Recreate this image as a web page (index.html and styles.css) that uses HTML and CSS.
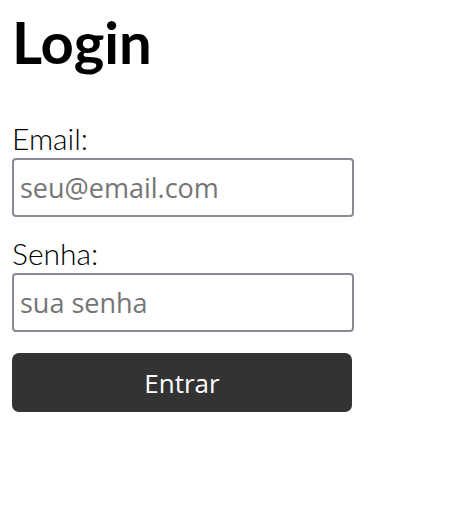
FILE: index.html
```html
<!DOCTYPE html>
<html lang="pt">
<head>
<meta charset="utf-8">
<link rel="stylesheet" href="styles.css">
</head>
<body>
<main class="login">
  <h1 class="title">Login</h1>
  <form class="form">
    <label class="label" for="email">Email:</label>
    <input class="field" id="email" type="email" placeholder="seu@email.com">
    <label class="label label-2" for="senha">Senha:</label>
    <input class="field" id="senha" type="password" placeholder="sua senha">
    <button class="btn" type="button">Entrar</button>
  </form>
</main>
</body>
</html>
```
FILE: styles.css
```css
html, body { margin: 0; padding: 0; background: #fff; }
.login { padding: 12px 12px; }
.title {
  font-family: "Lato", sans-serif;
  font-weight: 700;
  font-size: 58px;
  line-height: 1;
  margin: 1px 0 0 0;
  color: #000;
}
.form { display: flex; flex-direction: column; width: 342px; margin-top: 51px; }
.label {
  font-family: "Lato", sans-serif;
  font-weight: 300;
  font-size: 30px;
  line-height: 32px;
  margin-bottom: 4px;
  color: #000;
}
.label-2 { margin-top: 20px; }
.field {
  box-sizing: border-box;
  height: 59px;
  width: 342px;
  border: 2px solid #8a8996;
  border-radius: 4px;
  padding: 0 6px;
  font-family: "Open Sans", sans-serif;
  font-size: 27px;
  color: #333;
  outline: none;
}
.field::placeholder { color: #757575; }
.btn {
  margin-top: 21px;
  box-sizing: border-box;
  width: 340px;
  height: 59px;
  border: none;
  border-radius: 7px;
  background: #333;
  color: #fff;
  font-family: "Open Sans", sans-serif;
  font-size: 26px;
  cursor: pointer;
}
```
